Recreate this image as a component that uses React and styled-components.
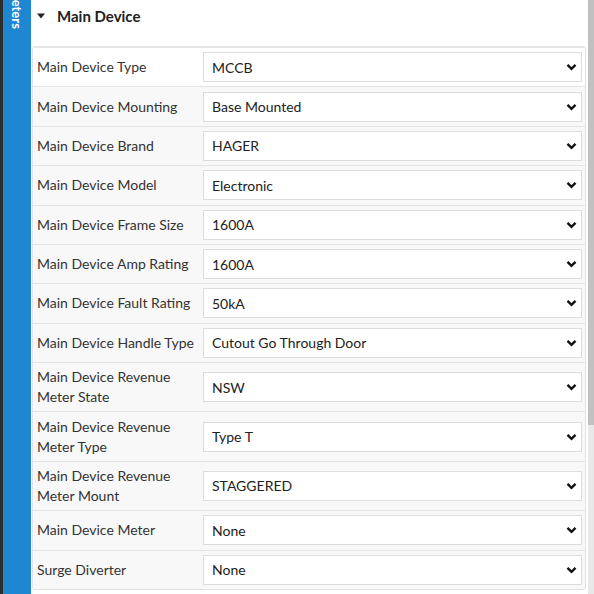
import React from "react";
import styled, { createGlobalStyle } from "styled-components";

const Global = createGlobalStyle`
  html, body { margin: 0; padding: 0; background: #fff; }
  body { font-family: Lato, "Noto Sans", sans-serif; overflow: hidden; }
  * { box-sizing: border-box; }
`;

const Page = styled.div`
  display: flex;
  width: 594px;
  height: 594px;
  overflow: hidden;
  background: #fff;
`;

const EdgeLine = styled.div`
  width: 3px;
  flex: none;
  background: #2d2d2d;
`;

const SideTab = styled.div`
  width: 28px;
  flex: none;
  background: #1f86d2;
  display: flex;
  justify-content: center;
  overflow: hidden;
`;

const SideTabText = styled.span`
  writing-mode: vertical-rl;
  color: #fff;
  font-weight: 700;
  font-size: 13px;
  margin-top: -37px;
  height: 74px;
  line-height: 28px;
  white-space: nowrap;
`;

const Main = styled.div`
  flex: 1;
  display: flex;
  flex-direction: column;
  padding-left: 1px;
  padding-right: 2px;
`;

const SectionHeader = styled.div`
  height: 46px;
  display: flex;
  align-items: flex-start;
  padding-top: 6px;
  padding-left: 5px;
  gap: 12px;
  color: #222;
  font-size: 15px;
  line-height: 20px;
  font-weight: 700;
`;

const Caret = styled.svg`
  width: 8px;
  height: 6px;
  flex: none;
  margin-top: 7px;
`;

const Card = styled.div`
  background: #f8f8f8;
  border: 1px solid #e2e2e2;
  border-top: 2px solid #e6e6e6;
  border-radius: 4px;
  overflow: hidden;
`;

const Row = styled.div`
  display: flex;
  align-items: center;
  padding: 4.2px 3px 4.2px 4px;
  border-top: ${(p) => (p.$first ? "none" : "1px solid #e4e4e4")};
  background: ${(p) => (p.$first ? "#fff" : "#f8f8f8")};
`;

const Label = styled.div`
  width: 166px;
  flex: none;
  font-size: 14px;
  line-height: 20px;
  color: #333;
`;

const SelectWrap = styled.div`
  position: relative;
  flex: 1;
  height: 30px;
`;

const Select = styled.select`
  appearance: none;
  -webkit-appearance: none;
  width: 100%;
  height: 30px;
  border: 1px solid #dcdcdc;
  border-radius: 0;
  background: #fff;
  padding: 0 28px 0 8px;
  font-family: Lato, "Noto Sans", sans-serif;
  font-size: 14px;
  color: #222;
  outline: none;
`;

const Chevron = styled.svg`
  position: absolute;
  right: 5px;
  top: 50%;
  transform: translateY(-50%);
  width: 11px;
  height: 8px;
  pointer-events: none;
`;

const ScrollTrack = styled.div`
  width: 6px;
  flex: none;
  background: #e8e8e8;
  display: flex;
  flex-direction: column;
`;

const ScrollThumb = styled.div`
  height: 425px;
  background: #c1c1c1;
`;

const rows = [
  ["Main Device Type", "MCCB"],
  ["Main Device Mounting", "Base Mounted"],
  ["Main Device Brand", "HAGER"],
  ["Main Device Model", "Electronic"],
  ["Main Device Frame Size", "1600A"],
  ["Main Device Amp Rating", "1600A"],
  ["Main Device Fault Rating", "50kA"],
  ["Main Device Handle Type", "Cutout Go Through Door"],
  ["Main Device Revenue Meter State", "NSW"],
  ["Main Device Revenue Meter Type", "Type T"],
  ["Main Device Revenue Meter Mount", "STAGGERED"],
  ["Main Device Meter", "None"],
  ["Surge Diverter", "None"],
];

export default function App() {
  return (
    <>
      <Global />
      <Page>
        <EdgeLine />
        <SideTab>
          <SideTabText>Parameters</SideTabText>
        </SideTab>
        <Main>
          <SectionHeader>
            <Caret viewBox="0 0 8 6">
              <path d="M0 0.5 H8 L4 5.5 Z" fill="#222" />
            </Caret>
            Main Device
          </SectionHeader>
          <Card>
            {rows.map(([label, value], i) => (
              <Row key={label} $first={i === 0}>
                <Label>{label}</Label>
                <SelectWrap>
                  <Select defaultValue={value}>
                    <option value={value}>{value}</option>
                  </Select>
                  <Chevron viewBox="0 0 11 8">
                    <path
                      d="M1.5 1.8 L5.5 5.8 L9.5 1.8"
                      fill="none"
                      stroke="#111"
                      strokeWidth="2.4"
                    />
                  </Chevron>
                </SelectWrap>
              </Row>
            ))}
          </Card>
        </Main>
        <ScrollTrack>
          <ScrollThumb />
        </ScrollTrack>
      </Page>
    </>
  );
}
